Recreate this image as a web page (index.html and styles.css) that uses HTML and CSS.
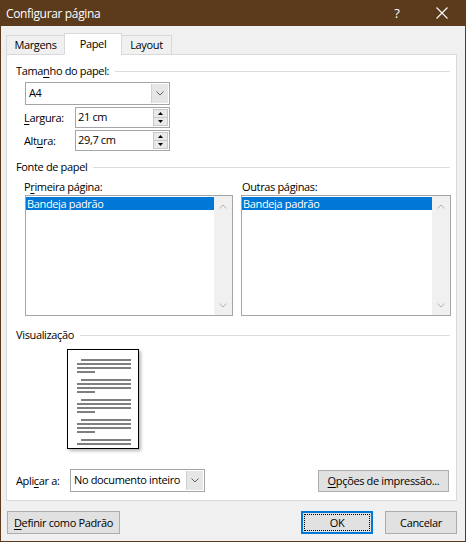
FILE: index.html
```html
<!DOCTYPE html>
<html lang="pt-BR">
<head>
<meta charset="utf-8">
<title>Configurar página</title>
<link rel="stylesheet" href="styles.css">
</head>
<body>
<div class="window">
  <div class="titlebar">
    <span class="title">Configurar página</span>
    <span class="tb-btn help">?</span>
    <span class="tb-btn close"><svg width="12" height="12" viewBox="0 0 12 12"><path d="M0.5 0.5L11.5 11.5M11.5 0.5L0.5 11.5" stroke="#fff" stroke-width="1.1" fill="none"/></svg></span>
  </div>
  <div class="content">
    <div class="tabs">
      <div class="tab">Margens</div>
      <div class="tab active">Papel</div>
      <div class="tab">Layout</div>
    </div>
    <div class="panel">
      <div class="legend legend-first">Tama<u>n</u>ho do papel:</div>
      <div class="combo combo-size">
        <span class="combo-text">A4</span>
        <span class="combo-btn"><svg width="8" height="5" viewBox="0 0 8 5"><path d="M0.5 0.5L4 4L7.5 0.5" stroke="#606060" fill="none"/></svg></span>
      </div>
      <div class="field-row field-width">
        <span class="field-label"><u>L</u>argura:</span>
        <div class="spin">
          <span class="spin-text">21 cm</span>
          <span class="spin-btns">
            <span class="spin-half"><svg width="5" height="3" viewBox="0 0 5 3"><path d="M0 3L2.5 0L5 3Z" fill="#000"/></svg></span>
            <span class="spin-half spin-down"><svg width="5" height="3" viewBox="0 0 5 3"><path d="M0 0L2.5 3L5 0Z" fill="#000"/></svg></span>
          </span>
        </div>
      </div>
      <div class="field-row field-height">
        <span class="field-label">Alt<u>u</u>ra:</span>
        <div class="spin">
          <span class="spin-text">29,7 cm</span>
          <span class="spin-btns">
            <span class="spin-half"><svg width="5" height="3" viewBox="0 0 5 3"><path d="M0 3L2.5 0L5 3Z" fill="#000"/></svg></span>
            <span class="spin-half spin-down"><svg width="5" height="3" viewBox="0 0 5 3"><path d="M0 0L2.5 3L5 0Z" fill="#000"/></svg></span>
          </span>
        </div>
      </div>

      <div class="legend legend-source">Fonte de papel</div>
      <div class="sources">
        <div class="source">
          <div class="source-label">P<u>r</u>imeira página:</div>
          <div class="listbox">
            <div class="list-items"><div class="list-item selected">Bandeja padrão</div></div>
            <div class="scrollbar">
              <svg width="8" height="5" viewBox="0 0 8 5"><path d="M0.5 4.5L4 1L7.5 4.5" stroke="#b4b4b4" fill="none"/></svg>
              <svg width="8" height="5" viewBox="0 0 8 5"><path d="M0.5 0.5L4 4L7.5 0.5" stroke="#b4b4b4" fill="none"/></svg>
            </div>
          </div>
        </div>
        <div class="source">
          <div class="source-label source-label-2">Outras pá<u>g</u>inas:</div>
          <div class="listbox">
            <div class="list-items"><div class="list-item selected">Bandeja padrão</div></div>
            <div class="scrollbar">
              <svg width="8" height="5" viewBox="0 0 8 5"><path d="M0.5 4.5L4 1L7.5 4.5" stroke="#b4b4b4" fill="none"/></svg>
              <svg width="8" height="5" viewBox="0 0 8 5"><path d="M0.5 0.5L4 4L7.5 0.5" stroke="#b4b4b4" fill="none"/></svg>
            </div>
          </div>
        </div>
      </div>

      <div class="legend legend-preview">Visualização</div>
      <svg class="preview" width="72" height="100" viewBox="0 0 72 100">
        <rect x="0.5" y="0.5" width="71" height="99" fill="#fff" stroke="#000"/>
        <g stroke="#000" stroke-width="1.2">
          <path d="M14 11H64M10 15H64M10 19H64M10 23H28"/>
          <path d="M14 31H64M10 35H64M10 39H64M10 43H28"/>
          <path d="M14 51H64M10 55H64M10 59H64M10 63H28"/>
          <path d="M14 71H64M10 75H64M10 79H64M10 83H28"/>
          <path d="M14 91H64M10 95H64"/>
        </g>
      </svg>

      <div class="apply-row">
        <span class="apply-label">Apli<u>c</u>ar a:</span>
        <div class="combo combo-apply">
          <span class="combo-text">No documento inteiro</span>
          <span class="combo-btn"><svg width="8" height="5" viewBox="0 0 8 5"><path d="M0.5 0.5L4 4L7.5 0.5" stroke="#606060" fill="none"/></svg></span>
        </div>
        <div class="button btn-options"><u>O</u>pções de impressão...</div>
      </div>
    </div>
    <div class="footer">
      <div class="button btn-default"><u>D</u>efinir como Padrão</div>
      <div class="button btn-ok"><span class="focus">OK</span></div>
      <div class="button btn-cancel">Cancelar</div>
    </div>
  </div>
</div>
</body>
</html>
```

FILE: styles.css
```css
* { box-sizing: border-box; }
html, body { margin: 0; padding: 0; }
body {
  width: 466px;
  height: 542px;
  overflow: hidden;
  font-family: "Open Sans", "Noto Sans", sans-serif;
  font-size: 11px;
  letter-spacing: -0.35px;
  color: #000;
  background: #f0f0f0;
}
u { text-decoration: underline; text-decoration-thickness: 1px; text-underline-offset: 2px; }

.window {
  width: 466px;
  height: 542px;
  display: flex;
  flex-direction: column;
  background: #f0f0f0;
  border: 1px solid #5b3b1c;
  border-top: 0;
}

.titlebar {
  height: 26px;
  flex: none;
  background: #5b3b1c;
  color: #fff;
  display: flex;
  align-items: center;
}
.title { flex: 1; padding-left: 5px; font-size: 12px; }
.tb-btn { width: 46px; height: 26px; display: flex; align-items: center; justify-content: center; }
.help { font-size: 13px; padding-left: 2px; }

.content {
  flex: 1;
  display: flex;
  flex-direction: column;
  padding: 7px 8px 6px 5px;
}

.tabs {
  display: flex;
  align-items: flex-end;
  height: 22px;
  margin-bottom: -1px;
  position: relative;
  z-index: 1;
}
.tab {
  height: 20px;
  line-height: 18px;
  border: 1px solid #d9d9d9;
  background: #f0f0f0;
  text-align: center;
}
.tab:nth-child(1) { width: 59px; }
.tab:nth-child(2) { width: 58px; margin-left: -1px; }
.tab:nth-child(3) { width: 51px; margin-left: -1px; }
.tab.active {
  height: 22px;
  background: #fff;
  border-bottom-color: #fff;
  line-height: 19px;
}

.panel {
  height: 447px;
  flex: none;
  background: #fff;
  border: 1px solid #d9d9d9;
  padding: 0 6px 0 9px;
  display: flex;
  flex-direction: column;
}

.legend {
  display: flex;
  align-items: center;
  height: 15px;
  line-height: 15px;
  white-space: nowrap;
}
.legend::after {
  content: "";
  flex: 1;
  border-top: 1px solid #dcdcdc;
  margin-left: 6px;
  margin-top: 1px;
}
.legend-first { margin-top: 8px; }
.legend-source { margin-top: 8px; }
.legend-preview { margin-top: 11px; }

.combo {
  display: flex;
  border: 1px solid #a5a5a5;
  background: #fff;
}
.combo-text { flex: 1; padding-left: 3px; white-space: nowrap; overflow: hidden; }
.combo-btn {
  width: 17px;
  margin: 1px 1px 1px 0;
  background: #e6e6e6;
  border-left: 1px solid #d0d0d0;
  display: flex;
  align-items: center;
  justify-content: center;
}
.combo-size {
  width: 145px;
  height: 23px;
  margin: 4px 0 0 9px;
  line-height: 20px;
}

.field-row {
  display: flex;
  align-items: center;
  margin: 2px 0 0 8px;
  height: 21px;
}
.field-label { width: 51px; }
.spin {
  width: 95px;
  height: 21px;
  border: 1px solid #a5a5a5;
  background: #fff;
  display: flex;
}
.spin-text { flex: 1; padding-left: 2px; line-height: 18px; }
.spin-btns {
  width: 15px;
  margin: 1px 1px 1px 0;
  display: flex;
  flex-direction: column;
  background: #e9e9e9;
  border: 1px solid #c8c8c8;
}
.spin-half { flex: 1; display: flex; align-items: center; justify-content: center; }
.spin-down { border-top: 1px solid #c8c8c8; }

.sources {
  display: grid;
  grid-template-columns: 208px 210px;
  column-gap: 8px;
  margin-left: 9px;
}
.source-label { height: 15px; line-height: 15px; margin: 5px 0 1px -1px; }
.source-label-2 { margin-left: 1px; }
.listbox {
  height: 121px;
  border: 1px solid #a5a5a5;
  display: flex;
}
.list-items { flex: 1; padding-top: 1px; }
.list-item { height: 13px; line-height: 13px; padding-left: 1px; white-space: nowrap; }
.list-item.selected { background: #0078d7; color: #fff; }
.scrollbar {
  width: 18px;
  background: #f0f0f0;
  display: flex;
  flex-direction: column;
  align-items: center;
  justify-content: space-between;
  padding: 8px 0 7px;
}

.preview {
  display: block;
  margin: 7px 0 0 51px;
  box-shadow: 2px 2px 3px rgba(0, 0, 0, 0.28);
}

.apply-row {
  display: flex;
  align-items: center;
  margin-top: 20px;
  height: 23px;
}
.apply-label { width: 54px; }
.combo-apply {
  width: 135px;
  height: 23px;
  line-height: 19px;
}
.combo-apply .combo-btn { width: 17px; }

.button {
  height: 23px;
  border: 1px solid #adadad;
  background: #e1e1e1;
  display: flex;
  align-items: center;
  justify-content: center;
  white-space: nowrap;
}
.btn-options { width: 131px; height: 22px; margin-left: auto; margin-right: 1px; }

.footer {
  display: flex;
  margin-top: 10px;
  padding-left: 1px;
}
.btn-default { width: 113px; }
.btn-ok {
  width: 72px;
  margin-left: auto;
  border: 2px solid #0078d7;
  padding: 1px;
}
.focus {
  flex: 1;
  align-self: stretch;
  border: 1px dotted #000;
  display: flex;
  align-items: center;
  justify-content: center;
}
.btn-cancel { width: 72px; margin-left: 12px; }
```
